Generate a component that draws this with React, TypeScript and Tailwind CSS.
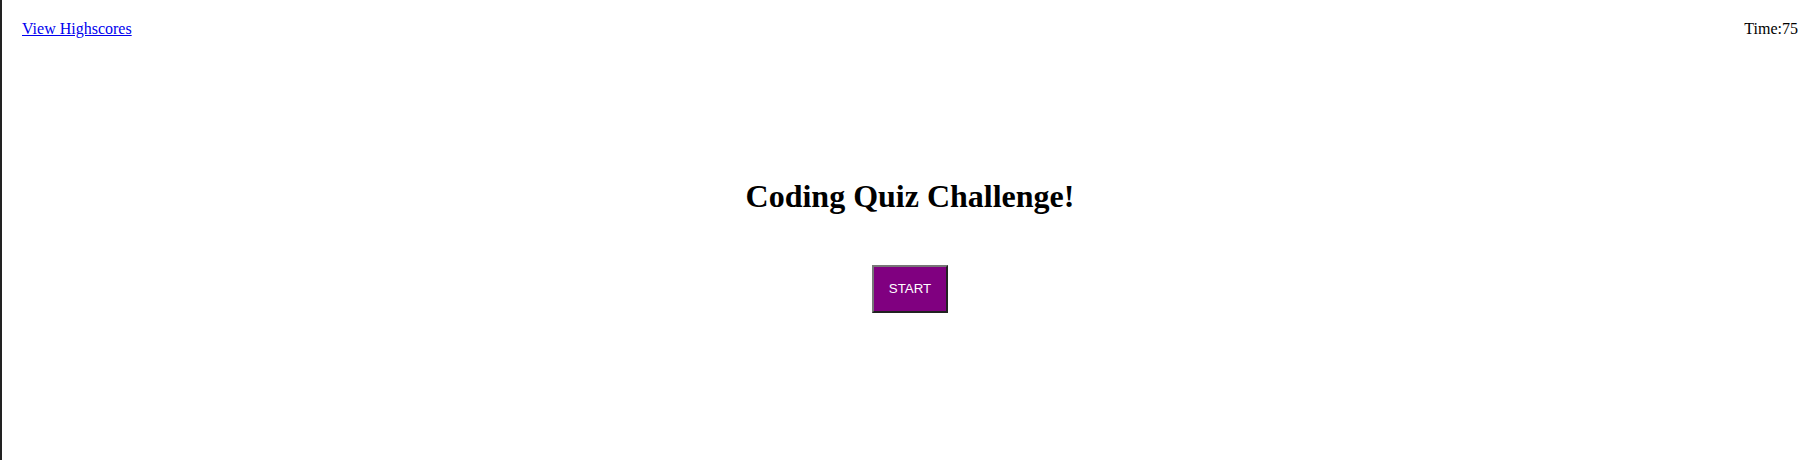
export default function App() {
  return (
    <div className="min-h-[460px] border-l-2 border-[#222] bg-white font-['Liberation_Serif',serif] text-black">
      <header className="flex items-start justify-between px-5 pt-[20px] text-base leading-[18px]">
        <a href="#" className="text-[#0000ee] underline">
          View Highscores
        </a>
        <div>Time:75</div>
      </header>
      <main className="flex flex-col items-center">
        <h1 className="mt-[140px] text-[32px] font-bold leading-[36px]">Coding Quiz Challenge!</h1>
        <button className="mt-[51px] border-2 border-t-[#777] border-l-[#777] border-r-[#222] border-b-[#222] bg-[#800080] px-[15px] py-[14px] font-['Liberation_Sans',Arial,sans-serif] text-[13.33px] leading-[16px] text-white">
          START
        </button>
      </main>
    </div>
  );
}
